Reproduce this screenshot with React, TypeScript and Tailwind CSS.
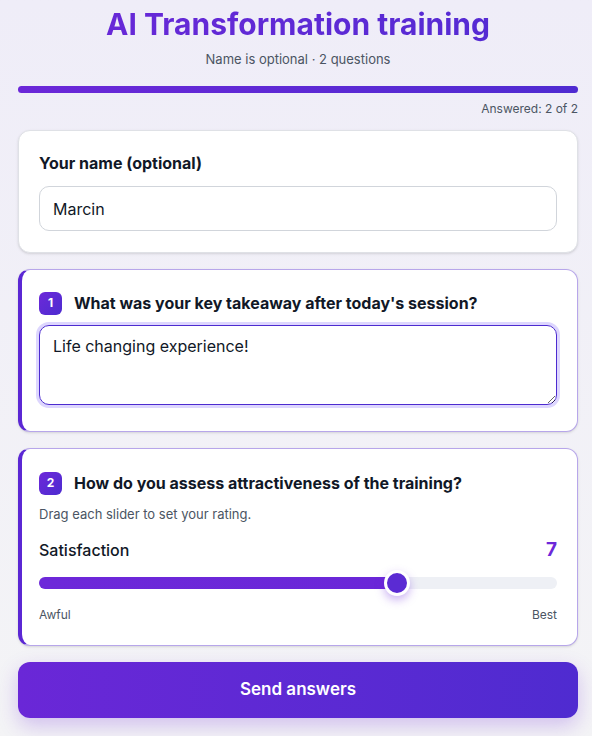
import { useState } from 'react'

const questions = [
  { n: 1, text: "What was your key takeaway after today's session?" },
  { n: 2, text: 'How do you assess attractiveness of the training?' },
]

function Badge({ n }: { n: number }) {
  return (
    <span className="flex h-[23px] w-[23px] shrink-0 items-center justify-center rounded-[6px] bg-gradient-to-br from-[#6d28d9] to-[#4c2bd0] text-[12px] font-bold text-white">
      {n}
    </span>
  )
}

export default function App() {
  const [name, setName] = useState('Marcin')
  const [answer, setAnswer] = useState('Life changing experience!')
  const value = 7
  const pct = value / 10

  return (
    <div className="min-h-[736px] bg-gradient-to-b from-[#efedf8] to-[#f4f4f6] pt-[6px] pr-[14px] pb-4 pl-[18px] font-['Inter',sans-serif] text-[#111827]">
      <h1 className="bg-gradient-to-r from-[#6b27d8] to-[#512bd2] bg-clip-text text-center text-[30px] leading-[36px] font-bold text-transparent">
        AI Transformation training
      </h1>
      <p className="mt-[7px] text-center text-[13px] leading-5 text-[#4b5563]">
        Name is optional · 2 questions
      </p>

      <div className="mt-[17px] h-[7px] rounded-full bg-[#e4def7]">
        <div className="h-full w-full rounded-full bg-gradient-to-r from-[#6b27d8] to-[#4f2bd1]" />
      </div>
      <p className="mt-[8px] text-right text-[12px] leading-4 text-[#4b5563]">Answered: 2 of 2</p>

      {/* name */}
      <div className="mt-[13px] rounded-xl border border-[#dfe1e6] bg-white px-5 pt-5 pb-[21px] shadow-sm">
        <label className="block text-[16px] leading-6 font-bold">Your name (optional)</label>
        <input
          value={name}
          onChange={(e) => setName(e.target.value)}
          className="mt-[11px] block h-[45px] w-full rounded-[10px] border border-[#d1d5db] px-[13px] text-[16px] text-[#111827] outline-none"
        />
      </div>

      {/* question 1 */}
      <div className="mt-[16px] rounded-xl border border-[#b7a6ea] border-l-4 border-l-[#5b27d4] bg-white pt-[21px] pr-5 pb-[26px] pl-[17px] shadow-sm">
        <div className="flex items-center gap-3">
          <Badge n={questions[0].n} />
          <h2 className="text-[16px] leading-6 font-bold">{questions[0].text}</h2>
        </div>
        <textarea
          value={answer}
          onChange={(e) => setAnswer(e.target.value)}
          className="mt-[10px] block h-[80px] w-full rounded-[10px] border border-[#4c2bd0] px-[13px] py-[8px] text-[16px] leading-6 text-[#111827] ring-[3px] ring-[#ddd6fe] outline-none"
        />
      </div>

      {/* question 2 */}
      <div className="mt-[16px] rounded-xl border border-[#b7a6ea] border-l-4 border-l-[#5b27d4] bg-white pt-[22px] pr-5 pb-[22px] pl-[17px] shadow-sm">
        <div className="flex items-center gap-3">
          <Badge n={questions[1].n} />
          <h2 className="text-[16px] leading-6 font-bold">{questions[1].text}</h2>
        </div>
        <p className="mt-[9px] text-[13px] leading-5 text-[#4b5563]">Drag each slider to set your rating.</p>

        <div className="mt-[14px] flex items-center justify-between">
          <span className="text-[16px] leading-6 font-medium">Satisfaction</span>
          <span className="text-[19px] leading-6 font-bold text-[#6d28d9]">{value}</span>
        </div>

        <div className="relative mt-[15px] h-[12px] rounded-full bg-[#eef0f5]">
          <div
            className="h-full rounded-full bg-gradient-to-r from-[#6d28d9] to-[#6a27d8]"
            style={{ width: `calc((100% - 24px) * ${pct} + 12px)` }}
          />
          <div
            className="absolute top-1/2 h-[26px] w-[26px] -translate-x-1/2 -translate-y-1/2 rounded-full border-[3px] border-white bg-[#5b2bd3] shadow-[0_4px_10px_rgba(109,40,217,0.35)]"
            style={{ left: `calc((100% - 24px) * ${pct} + 12px)` }}
          />
        </div>

        <div className="mt-[18px] flex justify-between text-[12px] leading-4 text-[#4b5563]">
          <span>Awful</span>
          <span>Best</span>
        </div>
      </div>

      <button className="mt-[16px] h-[56px] w-full rounded-xl bg-gradient-to-r from-[#6a27d7] to-[#4f2bd0] text-[17px] font-semibold text-white shadow-[0_8px_20px_rgba(109,40,217,0.25)]">
        Send answers
      </button>
    </div>
  )
}
